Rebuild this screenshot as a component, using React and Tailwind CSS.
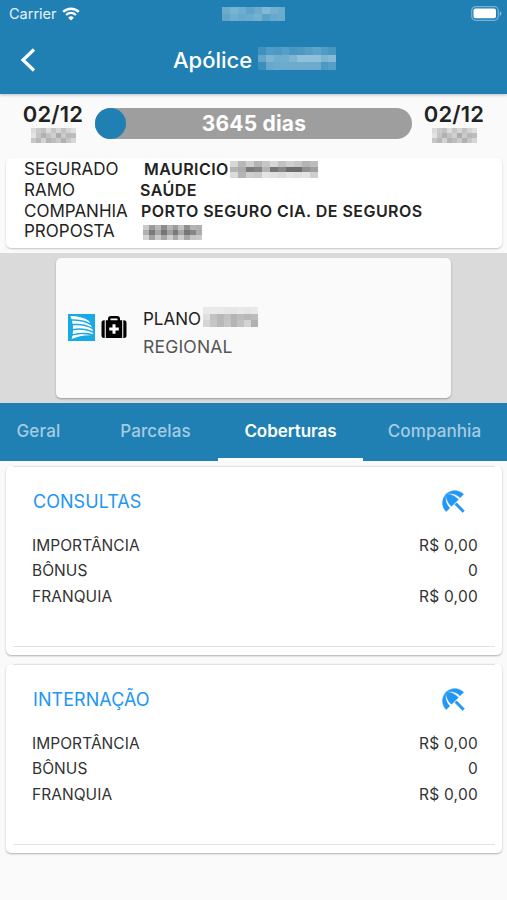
const tabs = [
  { label: 'Geral', className: 'w-[77px] tracking-[0.2px]' },
  { label: 'Parcelas', className: 'w-[141px] pl-[16px] tracking-[0.1px]' },
  { label: 'Coberturas', className: 'w-[145px] tracking-[-0.05px]', active: true },
  { label: 'Companhia', className: 'w-[144px] pr-px tracking-[0.1px]' },
]

const coverages = ['CONSULTAS', 'INTERNAÇÃO']

// Opacity (in percent) of every tile in the hidden values
const masks = {
  time: [
    [34, 40, 36, 28, 34, 44, 38, 34],
    [30, 36, 32, 34, 38, 26, 32, 34],
  ],
  policy: [
    [14, 22, 20, 24, 18, 20, 24, 28, 22, 18],
    [30, 42, 36, 36, 42, 50, 50, 50, 42, 46],
    [12, 32, 34, 34, 34, 34, 34, 34, 20, 24],
  ],
  year: [
    [14, 22, 26, 14, 24, 16, 26, 18, 12],
    [10, 24, 34, 26, 20, 36, 22, 30, 28],
    [24, 30, 18, 32, 28, 22, 34, 24, 16],
  ],
  name: [
    [18, 32, 22, 34, 26, 18, 28, 22, 26, 34, 30],
    [34, 38, 60, 56, 34, 62, 54, 66, 66, 50, 44],
    [16, 34, 22, 24, 12, 14, 16, 12, 14, 12, 22],
  ],
  proposal: [
    [24, 46, 32, 52, 34, 46, 28, 50, 34, 36],
    [36, 60, 40, 62, 42, 60, 40, 62, 54, 38],
    [20, 42, 24, 40, 22, 38, 22, 40, 26, 24],
  ],
  plan: [
    [8, 8, 8, 9, 9, 8, 9, 8],
    [12, 26, 30, 26, 32, 28, 30, 28],
    [16, 24, 30, 24, 32, 26, 18, 34],
  ],
}

function Mask({ rows, className }) {
  return (
    <span aria-hidden="true" className={`flex flex-col ${className}`}>
      {rows.map((row, i) => (
        <span key={i} className="flex flex-1">
          {row.map((value, j) => (
            <span
              key={j}
              className="flex-1 bg-current"
              style={{ opacity: value / 100 }}
            />
          ))}
        </span>
      ))}
    </span>
  )
}

function WifiIcon() {
  return (
    <svg viewBox="0 0 18 14" className="h-[14px] w-[18px]" fill="none">
      <path d="M1.2 4.9a11.2 11.2 0 0 1 15.6 0" stroke="white" strokeWidth="2.5" />
      <path d="M4.1 7.9a7 7 0 0 1 9.8 0" stroke="white" strokeWidth="2.1" />
      <path d="M9 13.6 6.2 10.7a4 4 0 0 1 5.6 0z" fill="white" />
    </svg>
  )
}

function BatteryIcon() {
  return (
    <svg viewBox="0 0 31 15" className="h-[15px] w-[31px]" fill="none">
      <rect x=".7" y=".7" width="26.6" height="13.6" rx="4" stroke="white" strokeOpacity=".4" strokeWidth="1.2" />
      <rect x="2.5" y="2.5" width="22.5" height="9.8" rx="2" fill="white" />
      <path d="M28.8 5.2c2 .8 2 3.8 0 4.6z" fill="white" fillOpacity=".5" />
    </svg>
  )
}

function InsurerLogo() {
  return (
    <svg viewBox="0 0 27 27" className="h-[27px] w-[27px]">
      <path fill="#18a9e8" d="M0 0h27v27H0z" />
      <g fill="white">
        <path d="M2.3 2.1C9 2.1 16.500 3.400 21.500 7.500L22 9C15.500 5.800 9.500 5.200 3.600 5.300z" />
        <path d="M3.900 6.700C11 6.500 17.500 7.800 22.800 11.200L24 13.400C17.500 10.200 11 9.300 4.700 10.100z" />
        <path d="M4.900 11.500C11.500 10.700 18 11.700 24.300 15L25 17.300C18 14.300 11.500 13.500 5 15z" />
        <path d="M5 16.400C11.500 15.200 18 15.900 25.200 18.900V20.100C18 18.300 11.500 18.300 4.700 20.200z" />
        <path d="M4.400 21.700C10.500 19.700 17 19.700 23.500 21.300C16.500 20.900 10 22.200 3.600 25z" />
      </g>
    </svg>
  )
}

function MedicalCaseIcon() {
  return (
    <svg viewBox="0 0 26 23" className="h-[23px] w-[26px]">
      <path d="M8.200 5V3.200Q8.200 1.300 10 1.300h6q1.800 0 1.800 1.900V5" fill="none" stroke="black" strokeWidth="2.500" />
      <path d="M4.800 4.300h16.400V22H4.800zM3.700 4.300V22H3q-2.500 0-2.500-2.500V6.800Q.5 4.300 3 4.300zM22.300 4.300V22h.7q2.500 0 2.500-2.500V6.800Q25.500 4.300 23 4.300z" />
      <path d="M11.500 8.200h3v3.300h3.300v3h-3.300v3.300h-3v-3.300H8.200v-3h3.300z" fill="white" />
    </svg>
  )
}

function UmbrellaIcon() {
  return (
    <svg viewBox="0 0 24 24" className="h-[29px] w-[29px]" fill="currentColor" stroke="currentColor" strokeWidth=".5">
      <path d="M13.127 14.56l1.43-1.43 6.44 6.443L19.57 21z" />
      <path d="M17.42 8.83l2.86-2.86c-3.95-3.95-10.350-3.960-14.300-.02 3.930-1.300 8.310-.25 11.440 2.880z" />
      <path d="M5.950 5.980c-3.940 3.950-3.930 10.350.02 14.300l2.860-2.860C5.700 14.290 4.650 9.910 5.950 5.980z" />
      <path d="M5.970 5.960l-.01.01c-.38 3.010 1.170 6.880 4.300 10.020l5.730-5.730c-3.130-3.130-7.010-4.680-10.020-4.300z" />
    </svg>
  )
}

function PolicyDate({ className }) {
  return (
    <div className={`flex w-[64px] flex-col items-center ${className}`}>
      <p className="text-[22px] font-semibold leading-[26px] tracking-[0.2px]">02/12</p>
      <Mask rows={masks.year} className="mt-px h-[15px] w-[45px]" />
    </div>
  )
}

function CoverageCard({ title }) {
  return (
    <section className="flex h-[189px] flex-col rounded-[5px] bg-white px-[7px] shadow-[0_1px_2px_rgba(0,0,0,0.3)]">
      <div className="h-px shrink-0 bg-[#e2e2e2]" />
      <div className="flex h-[67px] items-center justify-between pl-[20px] pr-[27px] pt-px text-[#2196f3]">
        <h2 className="text-[18px] tracking-[0.05px]">{title}</h2>
        <UmbrellaIcon />
      </div>
      <dl className="-mt-[1.5px] flex-1 pl-[19px] pr-[17px] text-[15.5px] leading-[25.7px] tracking-[0.05px] text-[#333]">
        {[
          ['IMPORTÂNCIA', 'R$ 0,00'],
          ['BÔNUS', '0'],
          ['FRANQUIA', 'R$ 0,00'],
        ].map(([label, value]) => (
          <div key={label} className="flex justify-between">
            <dt>{label}</dt>
            <dd className="tracking-[0.25px]">{value}</dd>
          </div>
        ))}
      </dl>
      <div className="mb-[8px] h-px shrink-0 bg-[#e2e2e2]" />
    </section>
  )
}

export default function App() {
  return (
    <div className="h-[900px] w-[507px] overflow-hidden bg-[#fafafa] font-['Inter',sans-serif] text-[#222]">
      <header className="h-[94px] bg-[#2080b4] text-white shadow-[0_1px_3px_rgba(0,0,0,0.25)]">
        <div className="grid h-[28px] grid-cols-3 items-center pl-[6px] pr-[5px]">
          <div className="flex items-center gap-[5px] pb-px pl-[3px]">
            <span className="text-[14.5px] tracking-normal text-white/90">Carrier</span>
            <WifiIcon />
          </div>
          <Mask rows={masks.time} className="h-[14px] w-[63px] justify-self-center" />
          <div className="flex justify-end pb-[2px]">
            <BatteryIcon />
          </div>
        </div>
        <div className="flex h-[64px] items-center pl-[20px]">
          <svg viewBox="0 0 16 24" className="h-[24px] w-[16px]" fill="none">
            <path d="M14 1.500 3 12l11 10.500" stroke="white" strokeWidth="3.200" />
          </svg>
          <h1 className="ml-[137px] text-[22px] font-medium">Apólice</h1>
          <Mask rows={masks.policy} className="mb-[3px] ml-[6px] h-[23px] w-[78px]" />
        </div>
      </header>

      <div className="flex h-[64px] items-start pl-[21px] pt-[7px]">
        <PolicyDate />
        <div className="ml-[10px] mt-[7px] flex h-[31px] w-[317px] items-center rounded-full bg-[#9e9e9e]">
          <span className="h-[31px] w-[31px] rounded-full bg-[#2080b4]" />
          <span className="flex-1 pr-[30px] pt-px text-center text-[21px] font-bold tracking-[0.2px] text-white">3645 dias</span>
        </div>
        <PolicyDate className="ml-[10px]" />
      </div>

      <dl className="mx-[6px] grid h-[90px] w-[496px] grid-cols-[116px_1fr] content-start rounded-[5px] bg-white pl-[18px] pt-px text-[17px] leading-[20.8px] shadow-[0_1px_2px_rgba(0,0,0,0.22)]">
        <dt>SEGURADO</dt>
        <dd className="flex items-center pl-[4px] text-[16px] font-semibold tracking-[0.45px]">
          MAURICIO
          <Mask rows={masks.name} className="ml-px h-[17px] w-[88px]" />
        </dd>
        <dt>RAMO</dt>
        <dd className="text-[16px] font-semibold tracking-[0.45px]">SAÚDE</dd>
        <dt>COMPANHIA</dt>
        <dd className="pl-px text-[16px] font-semibold tracking-[0.45px]">PORTO SEGURO CIA. DE SEGUROS</dd>
        <dt>PROPOSTA</dt>
        <dd className="flex items-center pl-[3px]">
          <Mask rows={masks.proposal} className="mt-px h-[15px] w-[59px]" />
        </dd>
      </dl>

      <div className="mt-[5px] flex h-[150px] justify-center bg-[#dadada] pt-[5px]">
        <section className="flex h-[140px] w-[395px] items-center rounded-[5px] bg-[#fafafa] pl-[12px] shadow-[0_1px_2px_rgba(0,0,0,0.3)]">
          <div className="flex items-center gap-[6px] pb-[2px]">
            <InsurerLogo />
            <MedicalCaseIcon />
          </div>
          <div className="ml-[16px] pt-[9px] text-[18px] leading-[28px]">
            <div className="flex items-center text-[17px]">
              PLANO
              <Mask rows={masks.plan} className="mb-[3px] ml-[2px] h-[20px] w-[55px]" />
            </div>
            <p className="text-[17.5px] tracking-[0.2px] text-[#555]">REGIONAL</p>
          </div>
        </section>
      </div>

      <nav className="flex h-[58px] bg-[#2080b4] text-[17px]">
        {tabs.map((tab) => (
          <button
            key={tab.label}
            className={`flex items-center justify-center border-b-[3px] pt-[2px] ${tab.className} ${
              tab.active
                ? 'border-white font-semibold text-white'
                : 'border-transparent font-medium text-[#a6cce1]'
            }`}
          >
            {tab.label}
          </button>
        ))}
      </nav>

      <main className="flex flex-col gap-[9px] pl-[6px] pr-[5px] pt-[5px]">
        {coverages.map((title) => (
          <CoverageCard key={title} title={title} />
        ))}
      </main>
    </div>
  )
}
